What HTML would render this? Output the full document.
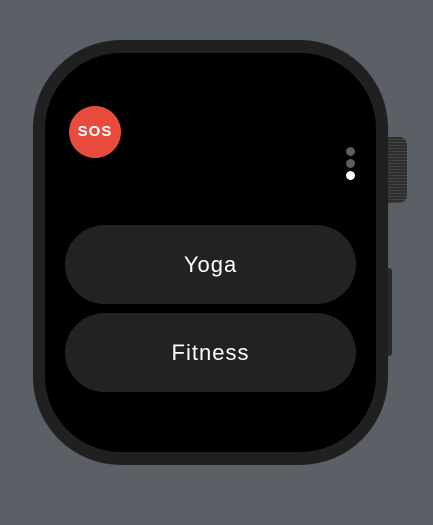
<!DOCTYPE html>
<html><head><style>
body{margin:0;width:433px;height:525px;background:#5b5f66;position:relative;overflow:hidden;font-family:"Liberation Sans",sans-serif}
.case{position:absolute;left:33px;top:40px;width:355px;height:425px;background:#202020;border-radius:88px}
.screen{position:absolute;left:45px;top:53px;width:331px;height:399px;background:#000;border-radius:76px}
.crown{position:absolute;left:383px;top:137px;width:24px;height:66px;background:repeating-linear-gradient(#2e2e2e 0 2px,#444 2px 3px);border-radius:8px;border-left:4px solid #1c1c1c;box-sizing:border-box}
.side{position:absolute;left:385px;top:268px;width:7px;height:88px;background:#2a2a2a;border-radius:3px}
.sos{position:absolute;left:69px;top:106px;width:52px;height:52px;border-radius:50%;background:#e84c3d;color:#fff;font-weight:bold;font-size:15px;letter-spacing:1px;text-align:center;line-height:52px}
.dot{position:absolute;left:346px;width:9px;height:9px;border-radius:50%;background:#5e5e5e}
.btn{position:absolute;left:65px;width:291px;height:79px;border-radius:40px;background:#222224;color:#fff;font-size:22px;letter-spacing:1px;text-align:center;line-height:79px}
</style></head><body>
<div class="crown"></div><div class="side"></div>
<div class="case"></div><div class="screen"></div>
<div class="sos">SOS</div>
<div class="dot" style="top:147px"></div>
<div class="dot" style="top:159px"></div>
<div class="dot" style="top:171px;background:#fff"></div>
<div class="btn" style="top:225px">Yoga</div>
<div class="btn" style="top:313px">Fitness</div>
</body></html>
